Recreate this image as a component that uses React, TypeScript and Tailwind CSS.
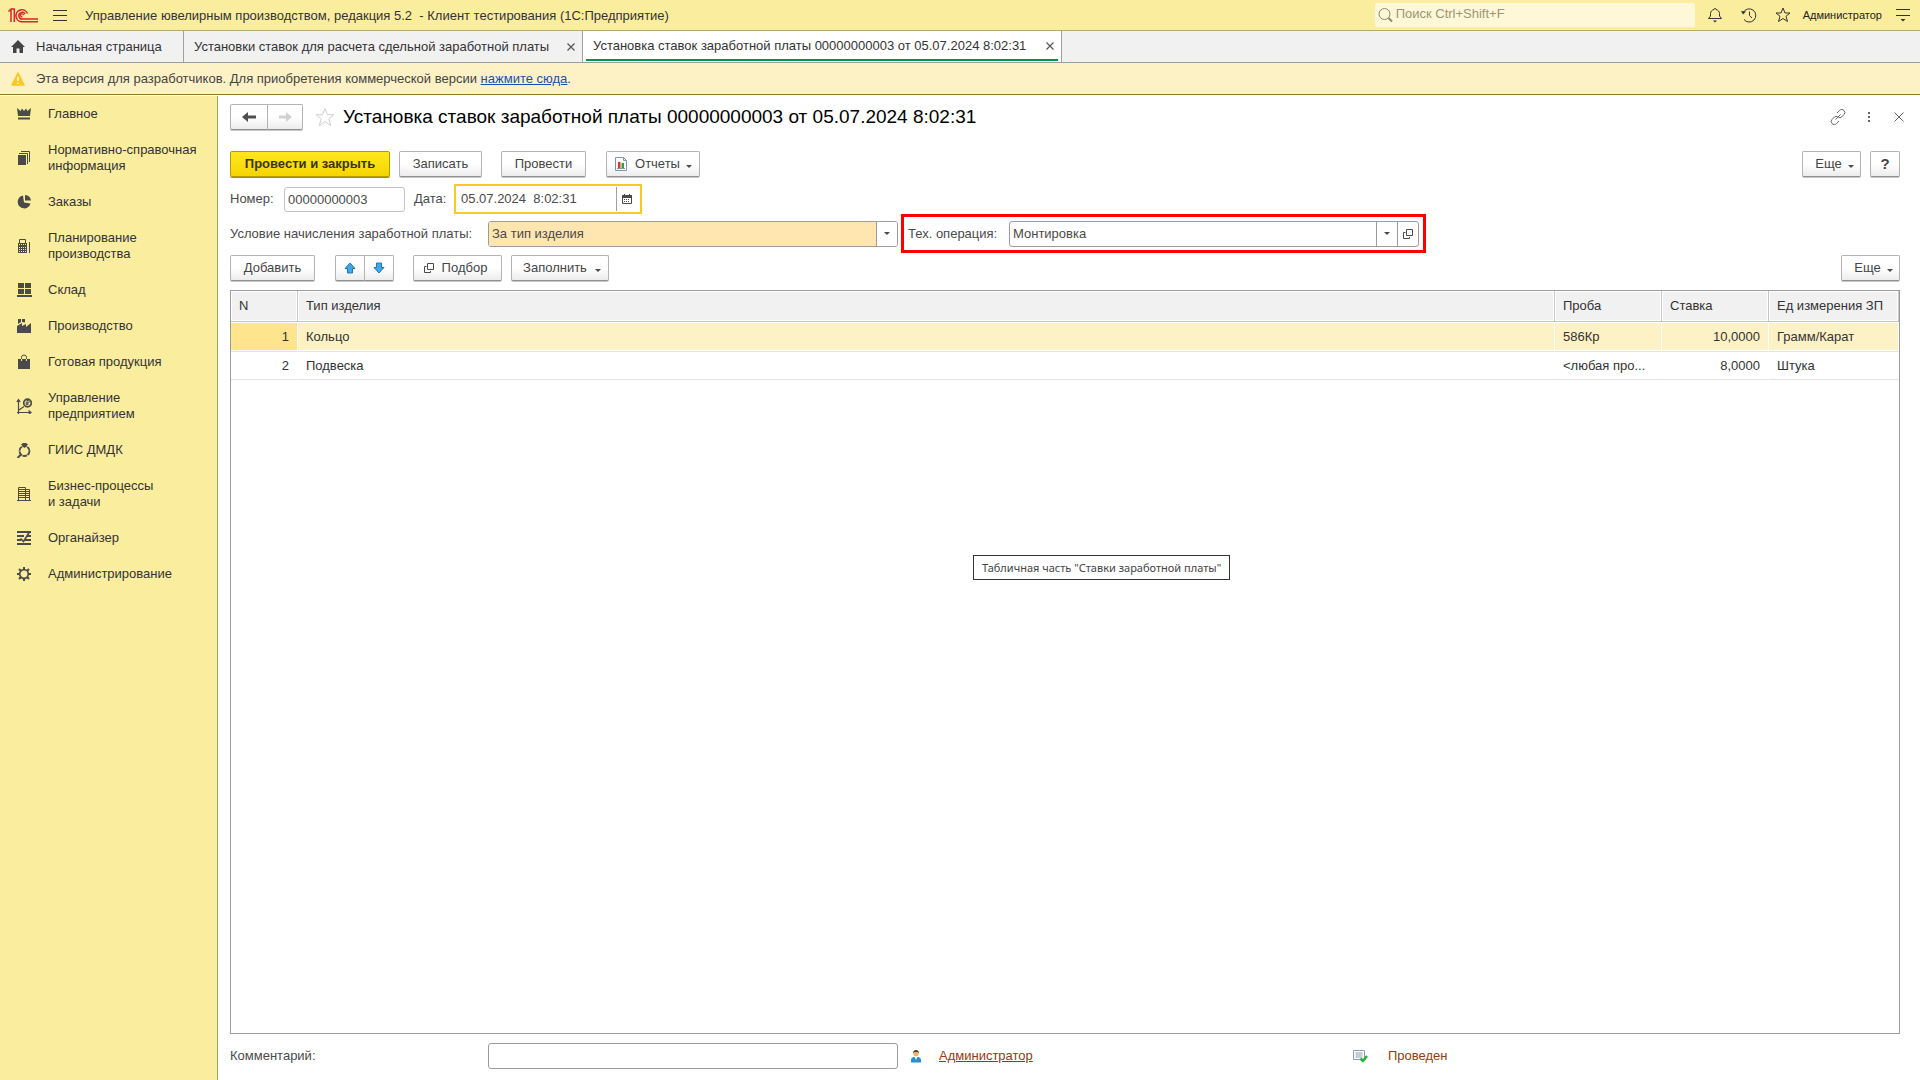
import type { ReactNode } from "react";

const ink = "#4a4a4a";

function Svg({ children, className = "size-4", box = "0 0 16 16" }: { children: ReactNode; className?: string; box?: string }) {
  return (
    <svg viewBox={box} className={`${className} shrink-0`} fill="none" aria-hidden="true">
      {children}
    </svg>
  );
}

const sections: { label: string[]; icon: ReactNode }[] = [
  {
    label: ["Главное"],
    icon: (
      <g fill={ink}>
        <path d="M1 2l3.500 3L6 2.500 8 5l2-2.500L11.500 5 15 2l-1 8H2z" />
        <path d="M2 11.500h12v2H2z" />
      </g>
    ),
  },
  {
    label: ["Нормативно-справочная", "информация"],
    icon: (
      <g>
        <path d="M2 5h8v10H2z" fill={ink} />
        <path d="M3 3.500h8.500V14M5 1.500h8.500V12" stroke={ink} />
      </g>
    ),
  },
  {
    label: ["Заказы"],
    icon: (
      <g fill={ink}>
        <path d="M7 1.500a6.500 6.500 0 1 0 7.500 8L8 8.500z" />
        <path d="M9 1v5.500h6A6.500 6.500 0 0 0 9 1z" />
      </g>
    ),
  },
  {
    label: ["Планирование", "производства"],
    icon: (
      <g>
        <path d="M3.500 6V1.500h6V6" stroke={ink} />
        <path d="M2 5h9v10H2z" fill={ink} />
        <path d="M13.500 4v11" stroke={ink} />
        <path d="M3 6.500h7M3 9.500h7M3 11.500h7M3 13.500h7" stroke="#fbed9e" strokeDasharray="1 1" />
      </g>
    ),
  },
  {
    label: ["Склад"],
    icon: <path d="M2 1h6v5H2zM9 1h6v5H9zM2 7h6v5H2zM9 7h6v5H9zM1 13h15v2H1z" fill={ink} />,
  },
  {
    label: ["Производство"],
    icon: (
      <g fill={ink}>
        <path d="M1 15V8l5-3v3l4-2v3l5-4v10z" />
        <path d="M2 1h3v3L2 6zM6 1h3v3.500L6 4z" />
      </g>
    ),
  },
  {
    label: ["Готовая продукция"],
    icon: (
      <g>
        <path d="M2 5h12v10H2z" fill={ink} />
        <path d="M5.500 7V3.500a2.500 2.500 0 0 1 5 0V7" stroke={ink} />
        <path d="M5.500 5v2M10.500 5v2" stroke="#fbed9e" />
      </g>
    ),
  },
  {
    label: ["Управление", "предприятием"],
    icon: (
      <g stroke={ink}>
        <path d="M2.500 16V2M.8 4l1.700-2.500L4.200 4M1 14.500h14M12.500 12.500l2.500 2-2.500 2M3 12l5-3.500" strokeWidth="1.200" />
        <circle cx="11.500" cy="5" r="3.800" strokeWidth="1.700" />
        <path d="M11 7.500v-5h1a1.200 1.200 0 0 1 0 2.500H9.500M9.500 6.200H12.500" />
      </g>
    ),
  },
  {
    label: ["ГИИС ДМДК"],
    icon: (
      <g>
        <circle cx="8.500" cy="9" r="5" stroke={ink} strokeWidth="1.800" strokeDasharray="4.500 .7" />
        <path d="M5 2.500L7 1h3l2 1.500L8.500 6z" fill={ink} />
        <path d="M5 12.500L1.500 16" stroke={ink} strokeWidth="2" />
      </g>
    ),
  },
  {
    label: ["Бизнес-процессы", "и задачи"],
    icon: (
      <g stroke={ink}>
        <path d="M2.500 15V1.500h7V15M9.500 3.500h4V15M1 14.500h14" />
        <path d="M3 3.500h6M3 5.500h6M3 7.500h6M3 9.500h6M3 11.500h6M10 5.500h3M10 7.500h3M10 9.500h3M10 11.500h3" />
      </g>
    ),
  },
  {
    label: ["Органайзер"],
    icon: (
      <g stroke={ink} strokeWidth="2">
        <path d="M1 2h14M1 6h7M11 6h4M1 10h4M9 10h6M1 14h14" />
        <path d="M13.500 2L7.500 11.500 4.500 8.500" strokeWidth="1.700" />
      </g>
    ),
  },
  {
    label: ["Администрирование"],
    icon: (
      <g stroke={ink}>
        <circle cx="8" cy="8" r="4.300" strokeWidth="1.700" />
        <path d="M8 1v2.500M8 12.500V15M1 8h2.500M12.500 8H15M3 3l2 2M11 11l2 2M13 3l-2 2M5 11l-2 2" strokeWidth="2" />
      </g>
    ),
  },
];

const rows = [
  { n: 1, type: "Кольцо", probe: "586Кр", rate: "10,0000", unit: "Грамм/Карат" },
  { n: 2, type: "Подвеска", probe: "<любая про...", rate: "8,0000", unit: "Штука" },
];

function Button({ children, className = "", label }: { children: ReactNode; className?: string; label?: string }) {
  return (
    <button
      type="button"
      aria-label={label}
      className={`flex h-[26px] items-center justify-center rounded-xs border border-[#b3b3b3] border-b-[#8f8f8f] bg-linear-to-b from-white from-50% to-[#ececec] text-[#454545] shadow-[0_1px_0_#c8c8c8] ${className}`}
    >
      {children}
    </button>
  );
}

function Caret({ className = "" }: { className?: string }) {
  return (
    <svg viewBox="0 0 6 3" className={`h-[3px] w-1.5 shrink-0 ${className}`} fill="#4a4a4a" aria-hidden="true">
      <path d="M0 0h6L3 3z" />
    </svg>
  );
}

function OpenIcon() {
  return (
    <Svg className="size-[10px]" box="0 0 10 10">
      <path d="M3.500.5h6v6h-6zM2.500 3.500H.5v6h6V8" stroke={ink} />
    </Svg>
  );
}

function TabClose({ label }: { label: string }) {
  return (
    <button type="button" aria-label={label}>
      <Svg className="size-2" box="0 0 8 8">
        <path d="M.5.5l7 7M7.500.5l-7 7" stroke="#555" strokeWidth="1.200" />
      </Svg>
    </button>
  );
}

function TopBar() {
  return (
    <header className="flex h-[31px] shrink-0 items-center border-b border-[#b3ab6b] bg-[#fbed9e] pr-[10px] pl-2">
      <Svg className="h-[15px] w-[30px]" box="0 0 30 15">
        <g stroke="#d8232a" strokeWidth="1.500">
          <path d="M.5 3.500L3 1.200V14M3 1h3.300v13" />
          <path d="M19.500 5.500A6 6 0 1 0 14.500 13.800H30" />
          <path d="M17 6A3.300 3.300 0 1 0 14.500 11H30" />
          <path d="M15.500 7.200a1.500 1.500 0 1 0-1 1.500" strokeWidth="1.200" />
        </g>
      </Svg>
      <button type="button" aria-label="Меню" className="ml-[15px]">
        <Svg className="h-3 w-[14px]" box="0 0 14 12">
          <path d="M0 1.500h14M0 6.500h14M0 11.500h14" stroke="#333" />
        </Svg>
      </button>
      <span className="ml-[18px] pt-px whitespace-pre text-[#333]">Управление ювелирным производством, редакция 5.2  - Клиент тестирования (1С:Предприятие)</span>
      <label className="ml-auto flex h-6 w-80 items-center gap-0.5 rounded-xs bg-[#fef8d8] pl-[3px]">
        <Svg>
          <circle cx="6.500" cy="7" r="5.500" stroke="#8d886c" />
          <path d="M10.500 11l3.500 3.500" stroke="#8d886c" strokeWidth="2" />
        </Svg>
        <input
          type="search"
          aria-label="Поиск"
          placeholder="Поиск Ctrl+Shift+F"
          className="min-w-0 flex-1 bg-transparent pb-0.5 text-[13px] outline-none placeholder:text-[#9a9579]"
        />
      </label>
      <div className="ml-3 flex items-center gap-[18px]">
        <button type="button" aria-label="Оповещения">
          <Svg>
            <path d="M1.500 11.500h13L12.500 9V6.500c0-2-1.500-3.500-3.500-4a1 1 0 0 0-2 0c-2 .5-3.500 2-3.500 4V9z" stroke="#333" />
            <path d="M6 13.500h4l-2 2z" fill="#333" />
          </Svg>
        </button>
        <button type="button" aria-label="История">
          <Svg>
            <path d="M2.300 5.500A6.600 6.600 0 1 1 3 12.500M8.500 4.500V8.500l2.500 2.500" stroke="#333" />
            <path d="M0 4l5 .5L2 7.500z" fill="#333" />
          </Svg>
        </button>
        <button type="button" aria-label="Избранное">
          <Svg>
            <path d="M8 1l2 5h5l-4 3.300 1.500 5.200L8 11.500l-4.500 3L5 9.300 1 6h5z" stroke="#333" />
          </Svg>
        </button>
      </div>
      <button type="button" className="ml-3 text-[11px] text-[#222]">Администратор</button>
      <button type="button" aria-label="Настройки окна" className="ml-[14px]">
        <Svg className="size-[14px]" box="0 0 14 14">
          <path d="M0 1.500h14M0 7.500h14" stroke="#333" />
          <path d="M4.500 11h5L7 13.500z" fill="#333" />
        </Svg>
      </button>
    </header>
  );
}

function Tabs() {
  return (
    <nav className="flex h-8 shrink-0 border-b border-[#9b9f9b] bg-[#f1f1f1] text-[#333]">
      <a href="#home" className="flex w-[184px] items-center gap-[11px] border-r border-[#a0a0a0] pl-[11px]">
        <Svg className="size-[14px]" box="0 0 14 14">
          <path d="M7 0L0 7h2v6h3.500V8.500h3V13H12V7h2z" fill="#444" />
        </Svg>
        Начальная страница
      </a>
      <div className="flex w-[399px] items-center justify-between border-r border-[#a0a0a0] pr-[7px] pl-[10px]">
        <a href="#list">Установки ставок для расчета сдельной заработной платы</a>
        <TabClose label="Закрыть список" />
      </div>
      <div className="w-[479px] border-r border-[#a0a0a0] bg-white px-[3px] pb-px">
        <div className="flex h-[30px] items-center justify-between border-b-2 border-[#00964a] pt-0.5 pr-1 pl-[7px]">
          <a href="#document">Установка ставок заработной платы 00000000003 от 05.07.2024 8:02:31</a>
          <TabClose label="Закрыть документ" />
        </div>
      </div>
    </nav>
  );
}

function Notice() {
  return (
    <div className="flex h-8 shrink-0 items-center gap-[11px] border-b border-[#94792a] bg-[#fdf2c6] pl-[11px] text-[#444]">
      <Svg className="size-[14px]" box="0 0 14 14">
        <path d="M7 1l6 12H1z" fill="#fbc81e" stroke="#fbc81e" strokeWidth="1.500" strokeLinejoin="round" />
        <path d="M7 4.500V9M7 10.500V12" stroke="#fff" strokeWidth="1.500" />
      </Svg>
      <p>
        Эта версия для разработчиков. Для приобретения коммерческой версии{" "}
        <a href="#buy" className="text-[#1a4fb0] underline">нажмите сюда</a>.
      </p>
    </div>
  );
}

function Sidebar() {
  return (
    <nav className="mt-px w-[218px] shrink-0 border-r border-[#a89f62] bg-[#fbed9e] text-[#333]">
      <ul>
        {sections.map((s) => (
          <li key={s.label[0]}>
            <a href="#section" className="flex items-center gap-4 py-[10px] pl-4 leading-4">
              <Svg>{s.icon}</Svg>
              <span>
                {s.label.map((line) => (
                  <span key={line} className="block">{line}</span>
                ))}
              </span>
            </a>
          </li>
        ))}
      </ul>
    </nav>
  );
}

function TitleRow() {
  return (
    <div className="flex h-[25px] items-center">
      <Button label="Назад" className="w-[38px] rounded-r-none">
        <Svg>
          <path d="M1 8l6-5v3.500h8v3H7V13z" fill="#4f4f4f" />
        </Svg>
      </Button>
      <Button label="Вперед" className="-ml-px w-9 rounded-l-none">
        <Svg>
          <path d="M15 8L9 3v3.500H2v3h7V13z" fill="#d2d2d2" />
        </Svg>
      </Button>
      <button type="button" aria-label="В избранное" className="ml-3">
        <Svg className="size-5" box="0 0 20 20">
          <path d="M10 1.500l2.500 6.200h6.300l-5 4.200 1.900 6.600-5.700-4-5.700 4 1.900-6.600-5-4.200h6.300z" stroke="#d0d0d0" />
        </Svg>
      </button>
      <h1 className="ml-2 text-[19px] leading-5 text-black">Установка ставок заработной платы 00000000003 от 05.07.2024 8:02:31</h1>
      <div className="-mr-1 ml-auto flex items-center">
        <button type="button" aria-label="Ссылка">
          <Svg>
            <g stroke="#666">
              <path d="M7 4l2.500-2.500a3 3 0 0 1 4.500 0 3 3 0 0 1 0 4L11.500 8a3 3 0 0 1-3 .5" />
              <path d="M9 12l-2.500 2.500a3 3 0 0 1-4.500 0 3 3 0 0 1 0-4L4.500 8a3 3 0 0 1 3-.5M5.500 10.500l5-5" />
            </g>
          </Svg>
        </button>
        <button type="button" aria-label="Еще действия" className="ml-[15px]">
          <Svg>
            <path d="M7 3h2v2H7zM7 7h2v2H7zM7 11h2v2H7z" fill="#666" />
          </Svg>
        </button>
        <button type="button" aria-label="Закрыть" className="ml-[17px]">
          <Svg className="size-[10px]" box="0 0 10 10">
            <path d="M.5.5l9 9M9.500.5l-9 9" stroke="#666" />
          </Svg>
        </button>
      </div>
    </div>
  );
}

function CommandBar() {
  return (
    <div className="mt-[22px] flex">
      <button
        type="button"
        className="h-[26px] w-[160px] rounded-xs border border-[#b49c00] bg-linear-to-b from-[#ffe81c] to-[#f5d500] font-bold text-[#3a3508] shadow-[0_1px_0_#a89000]"
      >
        Провести и закрыть
      </button>
      <Button className="ml-[9px] w-[83px]">Записать</Button>
      <Button className="ml-[19px] w-[85px]">Провести</Button>
      <Button className="ml-5 w-[94px]">
        <Svg className="size-[14px]" box="0 0 14 14">
          <path d="M1.500.5h8l3 3v10h-11z" fill="#fff" stroke="#8294a8" />
          <path d="M9.500.5v3h3" stroke="#8294a8" />
          <path d="M4 5h2.500v6H4z" fill="#e5302a" />
          <path d="M7.500 6H10v5H7.500z" fill="#1fa53a" />
          <path d="M3 11.500h8" stroke="#8294a8" />
        </Svg>
        <span className="ml-[7px]">Отчеты</span>
        <Caret className="mt-1 ml-1.5" />
      </Button>
      <Button className="ml-auto w-[59px] pl-1.5">
        Еще
        <Caret className="mt-1 ml-1.5" />
      </Button>
      <Button label="Справка" className="ml-[9px] w-[30px] text-[15px] font-bold">?</Button>
    </div>
  );
}

function NumberDateRow() {
  return (
    <div className="mt-[7px] flex h-[30px] items-center">
      <label htmlFor="number" className="w-[54px]">Номер:</label>
      <input id="number" defaultValue="00000000003" className="h-[25px] w-[121px] rounded-[3px] border border-[#c4c4c4] px-[3px] outline-none" />
      <label htmlFor="date" className="ml-[9px] w-10">Дата:</label>
      <div className="flex h-full w-[188px] items-center border-2 border-[#f9cb20]">
        <input id="date" defaultValue="05.07.2024  8:02:31" className="min-w-0 flex-1 pl-[5px] outline-none" />
        <button type="button" aria-label="Выбрать дату" className="flex h-6 items-center border-l border-[#a0a0a0] pr-2 pl-[5px]">
          <Svg className="size-[10px]" box="0 0 10 10">
            <path d="M2.500 0v2M7.500 0v2" stroke={ink} />
            <path d="M.5 1.500h9v8h-9z" stroke={ink} />
            <path d="M0 1h10v3H0z" fill={ink} />
            <path d="M2 5.500h6M2 7.500h6" stroke={ink} strokeDasharray="1 1" />
          </Svg>
        </button>
      </div>
    </div>
  );
}

function ConditionRow() {
  return (
    <div className="flex h-[39px] items-center">
      <label htmlFor="condition" className="w-[258px]">Условие начисления заработной платы:</label>
      <div className="relative h-[26px] w-[410px] overflow-hidden rounded-[3px] border border-[#9c9c9c]">
        <select id="condition" className="size-full appearance-none bg-[#ffe6b0] pl-[3px] outline-none">
          <option>За тип изделия</option>
        </select>
        <span className="pointer-events-none absolute inset-y-0 right-0 flex w-[21px] items-center justify-center border-l border-[#9c9c9c] bg-white">
          <Caret />
        </span>
      </div>
      <div className="ml-[3px] flex h-full items-center border-3 border-[#ff0000] pr-1 pl-1">
        <label htmlFor="operation" className="w-[101px]">Тех. операция:</label>
        <div className="flex h-[26px] w-[410px] overflow-hidden rounded-[3px] border border-[#9c9c9c]">
          <div className="relative flex-1">
            <select id="operation" className="size-full appearance-none pl-[3px] outline-none">
              <option>Монтировка</option>
            </select>
            <span className="pointer-events-none absolute inset-y-0 right-0 flex w-[21px] items-center justify-center border-l border-[#9c9c9c]">
              <Caret />
            </span>
          </div>
          <button type="button" aria-label="Открыть" className="flex w-[21px] items-center justify-center border-l border-[#9c9c9c]">
            <OpenIcon />
          </button>
        </div>
      </div>
    </div>
  );
}

function TableBar() {
  const arrow = "M6 1l5 5.500H8.500V11h-5V6.500H1z";
  return (
    <div className="mt-0.5 flex">
      <Button className="w-[85px]">Добавить</Button>
      <Button label="Вверх" className="ml-5 w-[30px] rounded-r-none">
        <Svg className="size-3" box="0 0 12 12">
          <path d={arrow} fill="#3ea8e8" stroke="#2477ad" />
        </Svg>
      </Button>
      <Button label="Вниз" className="-ml-px w-[30px] rounded-l-none">
        <Svg className="size-3 rotate-180" box="0 0 12 12">
          <path d={arrow} fill="#3ea8e8" stroke="#2477ad" />
        </Svg>
      </Button>
      <Button className="ml-[19px] w-[89px] gap-2 pr-1">
        <OpenIcon />
        Подбор
      </Button>
      <Button className="ml-[9px] w-[98px] pl-1">
        Заполнить
        <Caret className="mt-1 ml-2" />
      </Button>
      <Button className="ml-auto w-[59px] pl-1.5">
        Еще
        <Caret className="mt-1 ml-1.5" />
      </Button>
    </div>
  );
}

function RatesTable() {
  const head = "border-r border-b border-[#c6c6c6] px-2 text-left font-normal shadow-[inset_0_0_0_1px_#fff]";
  return (
    <div className="relative mt-[9px] flex-1 border border-[#9c9c9c] text-[#333]">
      <table className="w-full table-fixed border-separate border-spacing-0">
        <colgroup>
          <col className="w-[67px]" />
          <col />
          <col className="w-[107px]" />
          <col className="w-[107px]" />
          <col className="w-[130px]" />
        </colgroup>
        <thead>
          <tr className="h-[31px] bg-[#f1f1f1]">
            <th className={head}>N</th>
            <th className={head}>Тип изделия</th>
            <th className={head}>Проба</th>
            <th className={head}>Ставка</th>
            <th className={`${head} whitespace-nowrap`}>Ед измерения ЗП</th>
          </tr>
        </thead>
        <tbody className="[&_td]:border-r [&_td]:border-b [&_td]:border-r-white [&_td]:border-b-[#e2e2e2] [&_td]:px-2 [&_td]:whitespace-nowrap">
          {rows.map((r) => (
            <tr key={r.n} className="h-7 first:h-[30px] first:bg-[#fdf2c6] first:[&_td]:shadow-[inset_0_1px_0_#fff,inset_0_-1px_0_#fff]">
              <td className={r.n === 1 ? "bg-[#fde48d] text-right" : "text-right"}>{r.n}</td>
              <td>{r.type}</td>
              <td>{r.probe}</td>
              <td className="text-right">{r.rate}</td>
              <td>{r.unit}</td>
            </tr>
          ))}
        </tbody>
      </table>
      <div
        role="tooltip"
        className="absolute top-[264px] left-[742px] flex h-[25px] items-center border border-[#333] bg-white px-2 font-['Noto_Sans',sans-serif] text-[11px] whitespace-nowrap text-[#444]"
      >
        Табличная часть "Ставки заработной платы"
      </div>
    </div>
  );
}

function Footer() {
  return (
    <div className="mt-[9px] flex items-center">
      <label htmlFor="comment" className="w-[258px]">Комментарий:</label>
      <input id="comment" className="h-[26px] w-[410px] rounded-[3px] border border-[#9c9c9c] px-[3px] outline-none" />
      <Svg className="ml-3 h-[14px] w-3" box="0 0 12 14">
        <path d="M1 13.500V11q0-2.500 2.500-3h5Q11 8.500 11 11v2.500z" fill="#2d8fc9" />
        <path d="M4.500 8L6 11l1.500-3z" fill="#fff" />
        <circle cx="6" cy="4.500" r="2.700" fill="#eab06a" />
        <path d="M3 4.500Q3 1 6 1t3 3.500L8 3H4z" fill="#4a3b2a" />
      </Svg>
      <a href="#user" className="ml-[17px] w-[413px] text-[#963a10]">
        <span className="underline">Администратор</span>
      </a>
      <Svg>
        <path d="M1.500 2.500h11v9h-11z" stroke="#8a9cb0" />
        <path d="M3.500 5h7M3.500 7h7M3.500 9h7" stroke="#8a9cb0" />
        <path d="M8.500 10.500l2.500 2.500 4-5" stroke="#22b13c" strokeWidth="2.500" />
      </Svg>
      <span className="ml-5 text-[#963a10]">Проведен</span>
    </div>
  );
}

export default function App() {
  return (
    <div className="flex min-h-screen flex-col bg-white font-['Liberation_Sans',Arial,sans-serif] text-[13px] leading-4 text-[#4a4a4a]">
      <TopBar />
      <Tabs />
      <Notice />
      <div className="flex flex-1">
        <Sidebar />
        <main className="flex min-w-0 flex-1 flex-col pt-[9px] pr-5 pb-[11px] pl-3">
          <TitleRow />
          <CommandBar />
          <NumberDateRow />
          <ConditionRow />
          <TableBar />
          <RatesTable />
          <Footer />
        </main>
      </div>
    </div>
  );
}
